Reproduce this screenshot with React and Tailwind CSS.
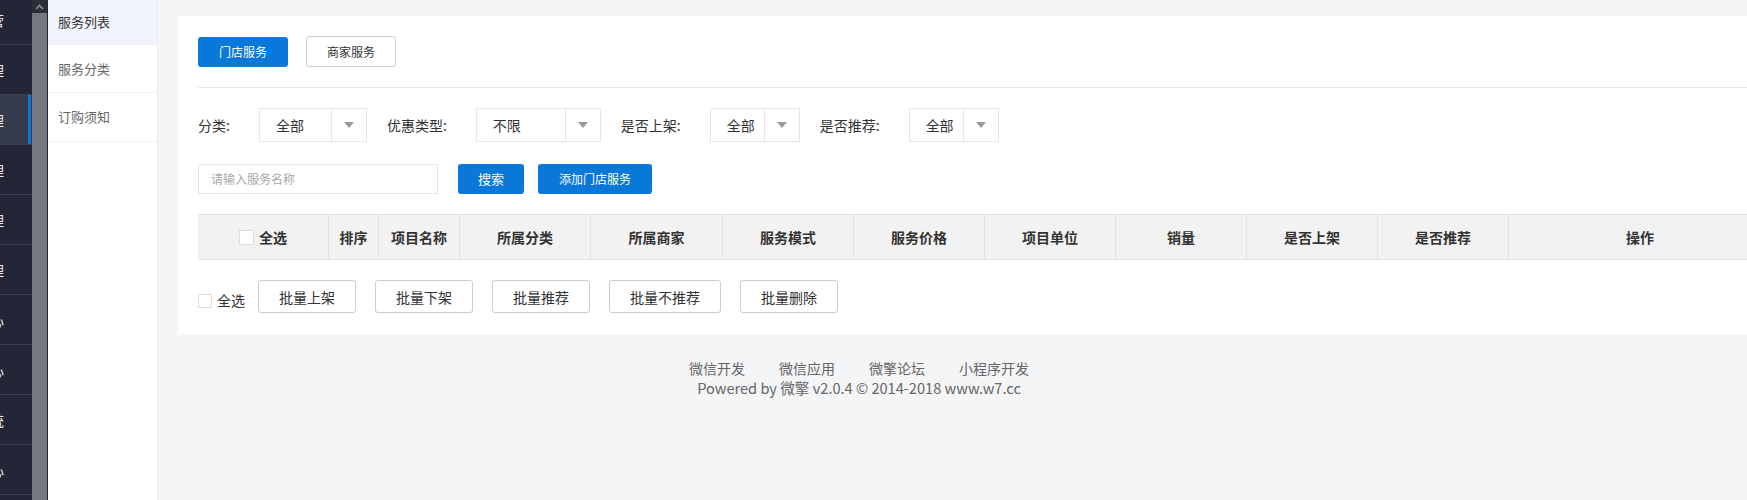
import React from "react";

const F = "font-['Microsoft_YaHei','Noto_Sans_CJK_SC','Noto_Sans',sans-serif]";

function Caret() {
  return (
    <svg width="10" height="6" viewBox="0 0 10 6" className="block">
      <path d="M0 0 L10 0 L5 6 Z" fill="#9a9a9a" />
    </svg>
  );
}

function Select({ value, textW }) {
  return (
    <div className="flex h-[34px] border border-[#e6e6e6] bg-white">
      <div className={`flex items-center pl-[16px] text-[14px] leading-[20px] text-[#333] ${textW}`}>{value}</div>
      <div className="flex w-[35px] items-center justify-center border-l border-[#e6e6e6]">
        <Caret />
      </div>
    </div>
  );
}

function Checkbox() {
  return <span className="inline-block h-[15px] w-[15px] border border-[#dcdcdc] bg-white" />;
}

const darkItems = ["运营", "商品管理", "订单管理", "会员管理", "营销管理", "财务管理", "门店中心", "消息中心", "系统", "设置中心"];

const cols = [
  { t: "排序", w: "w-[50px]" },
  { t: "项目名称", w: "w-[81px]" },
  { t: "所属分类", w: "w-[131px]" },
  { t: "所属商家", w: "w-[132px]" },
  { t: "服务模式", w: "w-[131px]" },
  { t: "服务价格", w: "w-[131px]" },
  { t: "项目单位", w: "w-[131px]" },
  { t: "销量", w: "w-[131px]" },
  { t: "是否上架", w: "w-[131px]" },
  { t: "是否推荐", w: "w-[131px]" },
  { t: "操作", w: "w-[262px]" },
];

export default function App() {
  return (
    <div className={`flex h-[500px] w-[1747px] overflow-hidden bg-[#f4f5f7] ${F}`}>
      {/* dark sidebar */}
      <div className="w-[32px] shrink-0 overflow-hidden bg-[#222636]">
        <div className="-mt-[5px]">
          {darkItems.map((t, i) => (
            <div
              key={i}
              className={`relative flex h-[50px] items-center justify-end overflow-hidden border-b border-[#3a3e4f] pr-[28px] text-[14px] leading-[20px] text-[#e8e8ec] ${
                i === 2 ? "bg-[#373b4e]" : ""
              }`}
            >
              <span className="whitespace-nowrap">{t}</span>
              {i === 2 && <span className="absolute right-[1px] top-0 h-full w-[3px] bg-[#0a78d8]" />}
            </div>
          ))}
        </div>
      </div>
      {/* scrollbar */}
      <div className="flex w-[15px] shrink-0 flex-col bg-[#75787f]">
        <div className="flex h-[13px] items-center justify-center bg-[#2b2e38]">
          <svg width="9" height="6" viewBox="0 0 9 6">
            <path d="M1 5 L4.5 1.5 L8 5" stroke="#8a8d96" strokeWidth="1.6" fill="none" />
          </svg>
        </div>
      </div>
      <div className="w-[1px] shrink-0 bg-[#23252c]" />
      {/* sub sidebar */}
      <div className="w-[110px] shrink-0 border-r border-[#ececec] bg-white">
        <div className="flex h-[45px] items-center border-b border-[#f0f0f0] bg-[#f1f4fc] pl-[10px] text-[13px] leading-[18px] text-[#333]">服务列表</div>
        <div className="flex h-[48px] items-center border-b border-[#f0f0f0] pl-[10px] text-[13px] leading-[18px] text-[#666]">服务分类</div>
        <div className="flex h-[49px] items-center border-b border-[#f0f0f0] pl-[10px] text-[13px] leading-[18px] text-[#666]">订购须知</div>
      </div>
      {/* main */}
      <div className="min-w-0 flex-1 pt-[16px] pl-[20px]">
        <div className="w-[1614px] bg-white px-[20px] pt-[20px] pb-[21px]">
          {/* tabs */}
          <div className="flex h-[31px] items-center gap-[18px]">
            <div className="flex h-[30px] w-[90px] items-center justify-center rounded-[3px] bg-[#0a78d8] text-[12px] leading-[16px] text-white">门店服务</div>
            <div className="flex h-[31px] w-[90px] items-center justify-center rounded-[3px] border border-[#cccccc] bg-white text-[12px] leading-[16px] text-[#333]">商家服务</div>
          </div>
          <div className="mt-[20px] h-[1px] bg-[#e8e8e8]" />
          {/* filters */}
          <div className="mt-[20px] flex h-[34px] items-center text-[14px] leading-[20px] text-[#333]">
            <span className="mr-[29px]">分类:</span>
            <Select value="全部" textW="w-[71px]" />
            <span className="ml-[20px] mr-[29px]">优惠类型:</span>
            <Select value="不限" textW="w-[88px]" />
            <span className="ml-[20px] mr-[29px]">是否上架:</span>
            <Select value="全部" textW="w-[53px]" />
            <span className="ml-[20px] mr-[29px]">是否推荐:</span>
            <Select value="全部" textW="w-[53px]" />
          </div>
          {/* search */}
          <div className="mt-[22px] flex h-[30px] items-center">
            <div className="flex h-[30px] w-[240px] items-center border border-[#e6e6e6] pl-[12px] text-[12px] leading-[16px] text-[#a9a9a9]">请输入服务名称</div>
            <div className="ml-[20px] flex h-[30px] w-[66px] items-center justify-center rounded-[3px] bg-[#0a78d8] text-[13px] leading-[16px] text-white">搜索</div>
            <div className="ml-[14px] flex h-[30px] w-[114px] items-center justify-center rounded-[3px] bg-[#0a78d8] text-[12px] leading-[16px] text-white">添加门店服务</div>
          </div>
          {/* table header */}
          <div className="mt-[20px] flex h-[46px] w-[1574px] border-y border-[#e2e2e2] bg-[#f2f2f2] text-[14px] font-bold leading-[20px] text-[#333]">
            <div className="flex w-[131px] shrink-0 items-center justify-center gap-[5px] border-r border-[#e2e2e2]">
              <Checkbox />
              <span>全选</span>
            </div>
            {cols.map((c, i) => (
              <div
                key={i}
                className={`flex shrink-0 items-center justify-center ${c.w} ${i < cols.length - 1 ? "border-r border-[#e2e2e2]" : ""}`}
              >
                {c.t}
              </div>
            ))}
          </div>
          {/* batch actions */}
          <div className="mt-[20px] flex h-[33px] items-center text-[14px] leading-[20px] text-[#333]">
            <span className="mt-[9px] inline-block h-[14px] w-[14px] border border-[#dcdcdc] bg-white" />
            <span className="ml-[5px] mt-[7px]">全选</span>
            {["批量上架", "批量下架", "批量推荐", "批量不推荐", "批量删除"].map((t, i) => (
              <div
                key={i}
                className={`flex h-[33px] items-center justify-center rounded-[3px] border border-[#cccccc] bg-white px-[20px] ${i === 0 ? "ml-[13px]" : "ml-[19px]"}`}
              >
                {t}
              </div>
            ))}
          </div>
        </div>
        {/* footer */}
        <div className="mt-[25px] w-[1402px] -ml-[20px] text-center text-[14px] leading-[19px] text-[#666]">
          <div className="flex justify-center gap-[34px]">
            <span>微信开发</span>
            <span>微信应用</span>
            <span>微擎论坛</span>
            <span>小程序开发</span>
          </div>
          <div className="text-[14.6px]">Powered by 微擎 v2.0.4 © 2014-2018 www.w7.cc</div>
        </div>
      </div>
    </div>
  );
}
